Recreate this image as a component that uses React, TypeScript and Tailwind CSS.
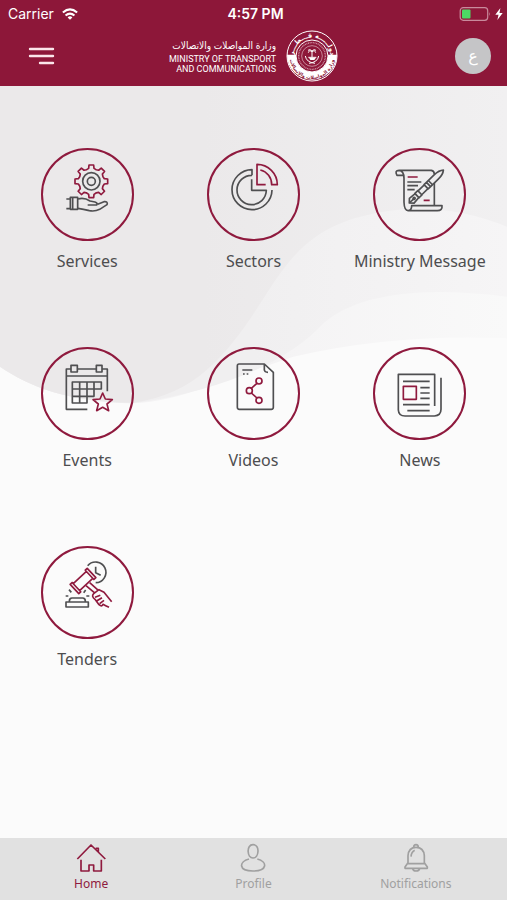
import type { ReactNode } from 'react'

const GREY = '#4f4f51'
const RED = '#8f1a3e'

type Tile = { label: string; viewBox: string; icon: ReactNode }

// Outline of an eight-toothed gear
function gearPath(cx: number, cy: number) {
  const profile = [[-14, -35], [-8, -39], [-7, -49], [7, -49], [8, -39], [14, -35]]
  const points: string[] = []
  for (let i = 0; i < 8; i++) {
    const a = (i * Math.PI) / 4
    for (const [x, y] of profile) {
      const px = cx + x * Math.cos(a) - y * Math.sin(a)
      const py = cy + x * Math.sin(a) + y * Math.cos(a)
      points.push(`${px.toFixed(1)} ${py.toFixed(1)}`)
    }
  }
  return `M${points.join('L')}Z`
}

const tiles: Tile[] = [
  {
    label: 'Services',
    viewBox: '39 33 267 267',
    icon: (
      <>
        <path d={gearPath(184, 127)} stroke={RED} />
        <circle cx="184" cy="127" r="26" />
        <circle cx="184" cy="127" r="12" />
        <path d="M109 180H122M109 209H122M121 175H143V211H121ZM128 175V211" />
        <path d="M144 180C158 176 168 178 180 186L195 189Q204 192 200 198H173M203 196L222 188Q235 187 231 197L209 211Q195 218 178 215Q160 210 144 208" />
      </>
    ),
  },
  {
    label: 'Sectors',
    viewBox: '44 33 267 267',
    icon: (
      <>
        <path d="M173 109V92A60 60 0 1 0 233 153M173 109A44 44 0 1 0 216 154H172V121" />
        <path d="M214 137H188V76A61 61 0 0 1 249 137H232A44 44 0 0 0 198 93" stroke={RED} />
      </>
    ),
  },
  {
    label: 'Ministry Message',
    viewBox: '93 33 267 267',
    icon: (
      <>
        <path d="M178 109H159Q151 94 165 94H262Q271 96 271 106M271 132V200M165 94Q180 95 180 118V190Q181 215 192 215Q203 214 203 200H294Q296 215 280 215H192" />
        <path d="M190 129H232M190 140H222M190 152H212" />
        <path d="M191 114H221M239 184H257" stroke={RED} />
        <g transform="translate(196 192) rotate(-44)" fill="#efeeef">
          <path d="M0 0L10 -10L32 -8V8L10 10Z" />
          <path d="M0 0H18" />
          <circle cx="20" cy="0" r="3" />
          <path d="M32 -9H44V9H32ZM44 -8H70V8H44ZM70 -9H80V9H70ZM80 -9H112Q132 -9 142 0Q132 9 112 9H80Z" />
          <path d="M88 -9V9" />
        </g>
      </>
    ),
  },
  {
    label: 'Events',
    viewBox: '39 28 267 267',
    icon: (
      <>
        <path d="M172 209H109V88H123M142 88H199M216 88H232V155M109 109H232" />
        <path d="M123 77H142V97H123ZM199 77H216V97H199Z" />
        <path d="M127 127H214V148H127ZM127 148V190H171V148M149 127V190M171 127V170M192 127V170H127" />
        <path
          d="M218 160L226 178L247 180L231 193L236 213L218 203L200 213L205 193L189 180L210 178Z"
          stroke={RED}
        />
      </>
    ),
  },
  {
    label: 'Videos',
    viewBox: '44 28 267 267',
    icon: (
      <>
        <path d="M134 73H210L237 98V203Q237 209 231 209H135Q129 209 129 203V78Q129 73 134 73ZM210 74V91Q211 98 221 98" />
        <path d="M144 91H174M146 103H151M157 103H162" />
        <g stroke={RED}>
          <circle cx="194" cy="124" r="9" />
          <circle cx="165" cy="153" r="9" />
          <circle cx="194" cy="182" r="9" />
          <path d="M188 131L171 146M171 160L188 175" />
        </g>
      </>
    ),
  },
  {
    label: 'News',
    viewBox: '48 28 267 267',
    icon: (
      <>
        <path d="M227 199V104H118V211Q119 229 138 229H226Q246 228 246 209V114" />
        <path d="M132 125H212M184 144H212M184 160H212M184 176H212M132 195H212M145 213H212" />
        <path d="M133 140H172V179H133Z" stroke={RED} />
      </>
    ),
  },
  {
    label: 'Tenders',
    viewBox: '39 30 267 267',
    icon: (
      <>
        <path d="M173 83A31 31 0 1 1 197 134M197 86V104L212 112" />
        <path d="M108 192H175V207H108ZM118 190Q118 180 126 180H158Q166 180 166 190M117 155L124 163M107 174H115M167 156L161 164M169 174H178" />
        <g stroke={RED}>
          <g transform="translate(159 129) rotate(-43)">
            <path d="M-35 -19H-27V19H-35ZM-27 -14H27V14H-27ZM27 -19H35V19H27Z" />
          </g>
          <path d="M168 143L193 164M179 134L205 157M191 167L207 155L222 163L245 191M191 167Q183 175 195 184L207 200Q216 208 219 199L227 203L237 208M195 178L211 172M201 188L216 179M209 197L222 187" />
        </g>
      </>
    ),
  },
]

const tabs = [
  {
    label: 'Home',
    viewBox: '228 38 96 96',
    active: true,
    icon: <path d="M235 89L276 47L319 89M290 57H298V67M246 91V125H270V107H284V125H307V91" />,
  },
  {
    label: 'Profile',
    viewBox: '712 38 96 96',
    icon: (
      <path d="M760 46C782 46 778 86 760 86C742 86 739 46 760 46ZM748 89C717 97 716 125 760 125C804 125 804 97 773 89" />
    ),
  },
  {
    label: 'Notifications',
    viewBox: '1199 38 96 96',
    icon: (
      <path d="M1240 54Q1240 46 1247 46Q1254 46 1254 54M1223 100V79Q1225 54 1247 54Q1270 54 1272 79V100L1281 113V117H1214V113ZM1223 103H1272M1232 82Q1233 68 1243 63M1237 118Q1239 125 1247 125Q1256 125 1258 118" />
    ),
  },
]

function StatusBar() {
  return (
    <div className="grid h-7 grid-cols-3 items-center pr-1 pl-2 font-['Inter',sans-serif] text-white">
      <div className="flex items-center gap-2 text-sm">
        <span>Carrier</span>
        <svg viewBox="0 0 18 13" className="h-3 w-4" fill="none" stroke="white" strokeWidth="2.4">
          <path d="M1 4.8Q9 -2 17 4.8M4 8.2Q9 4 14 8.2" />
          <path d="M6.3 10.3Q9 8 11.7 10.3L9 13Z" fill="white" stroke="none" />
        </svg>
      </div>
      <div className="text-center text-sm font-semibold">4:57 PM</div>
      <div className="flex items-center justify-end gap-1">
        <svg viewBox="0 0 31 14" className="h-3.5 w-8" fill="none">
          <rect x="0.7" y="0.7" width="27.5" height="12.6" rx="3" stroke="#c98a9c" strokeWidth="1.2" />
          <rect x="2.5" y="2.5" width="8.5" height="9" rx="1" fill="#4cd964" />
          <path d="M29.5 5Q31 7 29.5 9Z" fill="#c98a9c" />
        </svg>
        <svg viewBox="0 0 8 13" className="h-3 w-2" fill="white">
          <path d="M5.5 0L0 7.2H3.5L2.2 13L8 5.4H4.5Z" />
        </svg>
      </div>
    </div>
  )
}

function Emblem() {
  return (
    <svg viewBox="379 88 156 156" className="size-13" fill="none" role="img" aria-label="State of Qatar">
      <defs>
        <path id="emblem-top" d="M402 166A55 55 0 0 1 512 166" />
        <path id="emblem-bottom" d="M390 168A67 67 0 0 0 524 168" />
      </defs>
      <circle cx="457" cy="166" r="75" stroke="white" strokeWidth="3" />
      <path d="M382 162H532A75 75 0 0 1 382 162Z" fill="white" />
      <circle cx="457" cy="166" r="48" fill="#8d1739" stroke="white" strokeWidth="3" />
      <circle cx="457" cy="166" r="40" stroke="#cf93a5" strokeWidth="4" strokeDasharray="3 2" />
      <circle cx="457" cy="166" r="31" stroke="#e3bcc7" strokeWidth="2" />
      {/* Palm, dhow and crossed swords */}
      <path
        d="M457 153V170M457 153Q448 147 446 156M457 153Q466 147 468 156M457 151Q451 144 445 149M457 151Q463 144 469 149M446 170H470M437 166Q440 185 466 188M477 166Q474 185 448 188"
        stroke="white"
        strokeWidth="3"
      />
      <path d="M448 171H469L464 178H452Z" fill="white" />
      <g className="font-['DejaVu_Sans',sans-serif] font-bold" textAnchor="middle">
        <text fill="white" fontSize="20">
          <textPath href="#emblem-top" startOffset="50%">دولـــــة قـــطـــر</textPath>
        </text>
        <text fill="#8d1739" fontSize="14">
          <textPath href="#emblem-bottom" startOffset="50%">وزارة المواصلات والاتصالات</textPath>
        </text>
      </g>
    </svg>
  )
}

function Header() {
  return (
    <header className="bg-[#8d1739] text-white">
      <StatusBar />
      <div className="grid h-[58px] grid-cols-[1fr_auto_1fr] items-center px-4 pb-0.5">
        <button type="button" aria-label="Menu" className="ml-3 w-7">
          <svg viewBox="0 0 28 20" className="h-5 w-7" stroke="#fbe6eb" strokeWidth="2.4" strokeLinecap="round">
            <path d="M2 3H25M2 10H25M12 17H25" />
          </svg>
        </button>
        <div className="flex items-center gap-2.5">
          <div className="text-right font-['Roboto',sans-serif] text-[9px] leading-[10px] whitespace-nowrap">
            <p dir="rtl" className="font-['DejaVu_Sans_Condensed','DejaVu_Sans',sans-serif] text-[10px] leading-4">
              وزارة المواصلات والاتصالات
            </p>
            <p>MINISTRY OF TRANSPORT</p>
            <p>AND COMMUNICATIONS</p>
          </div>
          <Emblem />
        </div>
        <button
          type="button"
          aria-label="العربية"
          className="size-9 justify-self-end rounded-full bg-[#c5c5c7] font-['DejaVu_Sans',sans-serif] text-base"
        >
          ع
        </button>
      </div>
    </header>
  )
}

function Waves() {
  return (
    <svg
      viewBox="0 18 1521 1260"
      preserveAspectRatio="none"
      className="absolute inset-x-0 top-0 h-[420px] w-full"
      aria-hidden="true"
    >
      <defs>
        <linearGradient id="wave-light" x1="0" y1="0" x2="1" y2="0">
          <stop offset="0.5" stopColor="#f4f3f4" />
          <stop offset="1" stopColor="#f9f9f9" />
        </linearGradient>
        <linearGradient id="wave-mid" x1="0" y1="0" x2="1" y2="0">
          <stop offset="0.5" stopColor="#f0eff0" />
          <stop offset="1" stopColor="#f6f5f6" />
        </linearGradient>
        <linearGradient id="wave-dark" x1="0" y1="0" x2="1" y2="0">
          <stop offset="0.4" stopColor="#ebe9ea" />
          <stop offset="1" stopColor="#f1f0f1" />
        </linearGradient>
      </defs>
      <path d="M0 0H1521V775Q1180 760 880 830L620 920Q500 965 400 970C200 965 90 920 0 860Z" fill="url(#wave-light)" />
      <path d="M0 0H1521V650Q1120 600 970 730C870 840 680 930 400 970C200 965 90 920 0 860Z" fill="url(#wave-mid)" />
      <path
        d="M0 0H1521V440Q1300 350 1080 410C820 480 820 690 620 870Q530 950 400 968C200 965 90 920 0 860Z"
        fill="url(#wave-dark)"
      />
    </svg>
  )
}

export default function App() {
  return (
    <div className="flex min-h-screen flex-col bg-[#fbfbfb] font-['Noto_Sans',sans-serif]">
      <Header />

      <main className="relative flex-1 px-1 pt-[62px] pb-8">
        <Waves />
        <div className="relative grid grid-cols-3 gap-y-[74px]">
          {tiles.map((tile) => (
            <button key={tile.label} type="button" className="flex flex-col items-center gap-2">
              <span className="size-[93px] rounded-full border-2 border-[#8f1a3e]">
                <svg
                  viewBox={tile.viewBox}
                  className="size-full"
                  fill="none"
                  stroke={GREY}
                  strokeWidth="5"
                  strokeLinejoin="round"
                >
                  {tile.icon}
                </svg>
              </span>
              <span className="text-base whitespace-nowrap text-[#4d4d4f]">{tile.label}</span>
            </button>
          ))}
        </div>
      </main>

      <nav className="grid grid-cols-3 bg-[#e1e1e1] px-2.5 pt-1 pb-2">
        {tabs.map((tab) => (
          <a
            key={tab.label}
            href="#"
            aria-current={tab.active ? 'page' : undefined}
            className={`flex flex-col items-center gap-0.5 text-xs ${tab.active ? 'text-[#8f1a3e]' : 'text-[#a0a0a0]'}`}
          >
            <svg
              viewBox={tab.viewBox}
              className="size-8"
              fill="none"
              stroke="currentColor"
              strokeWidth="5"
              strokeLinejoin="round"
            >
              {tab.icon}
            </svg>
            {tab.label}
          </a>
        ))}
      </nav>
    </div>
  )
}
